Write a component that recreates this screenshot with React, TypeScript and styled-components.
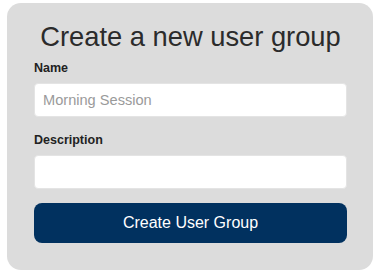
import styled, { createGlobalStyle } from "styled-components";

const GlobalStyle = createGlobalStyle`
  html, body {
    margin: 0;
    background: #ffffff;
    font-family: "Liberation Sans", Arial, sans-serif;
  }
`;

export default function App() {
  return (
    <Page>
      <GlobalStyle />
      <Card onSubmit={(e) => e.preventDefault()}>
        <Title>Create a new user group</Title>
        <Field>
          <Label htmlFor="group-name">Name</Label>
          <Input id="group-name" placeholder="Morning Session" />
        </Field>
        <Field>
          <Label htmlFor="group-description">Description</Label>
          <Input id="group-description" />
        </Field>
        <SubmitButton type="submit">Create User Group</SubmitButton>
      </Card>
    </Page>
  );
}

const Page = styled.div`
  padding: 3px 7px;
`;

const Card = styled.form`
  display: flex;
  flex-direction: column;
  width: 366px;
  box-sizing: border-box;
  padding: 18px 26px 27px 27px;
  background: #dcdcdc;
  border-radius: 14px;
`;

const Title = styled.h1`
  margin: 0 0 9px;
  font-size: 27.3px;
  line-height: 31px;
  font-weight: 400;
  color: #2b2b2b;
  text-align: center;
`;

const Field = styled.div`
  display: flex;
  flex-direction: column;
  gap: 8px;

  & + & {
    margin-top: 16px;
  }
`;

const Label = styled.label`
  font-size: 12.5px;
  line-height: 14px;
  font-weight: 700;
  color: #222222;
`;

const Input = styled.input`
  height: 34px;
  box-sizing: border-box;
  padding: 0 8px;
  border: 1px solid #e4e4e4;
  border-radius: 4px;
  background: #ffffff;
  font-family: inherit;
  font-size: 14.6px;
  color: #333333;
  outline: none;

  &::placeholder {
    color: #9a9a9a;
  }
`;

const SubmitButton = styled.button`
  margin-top: 14px;
  height: 40px;
  border: none;
  border-radius: 8px;
  background: #01315f;
  color: #ffffff;
  font-family: inherit;
  font-size: 16px;
  cursor: pointer;
`;
